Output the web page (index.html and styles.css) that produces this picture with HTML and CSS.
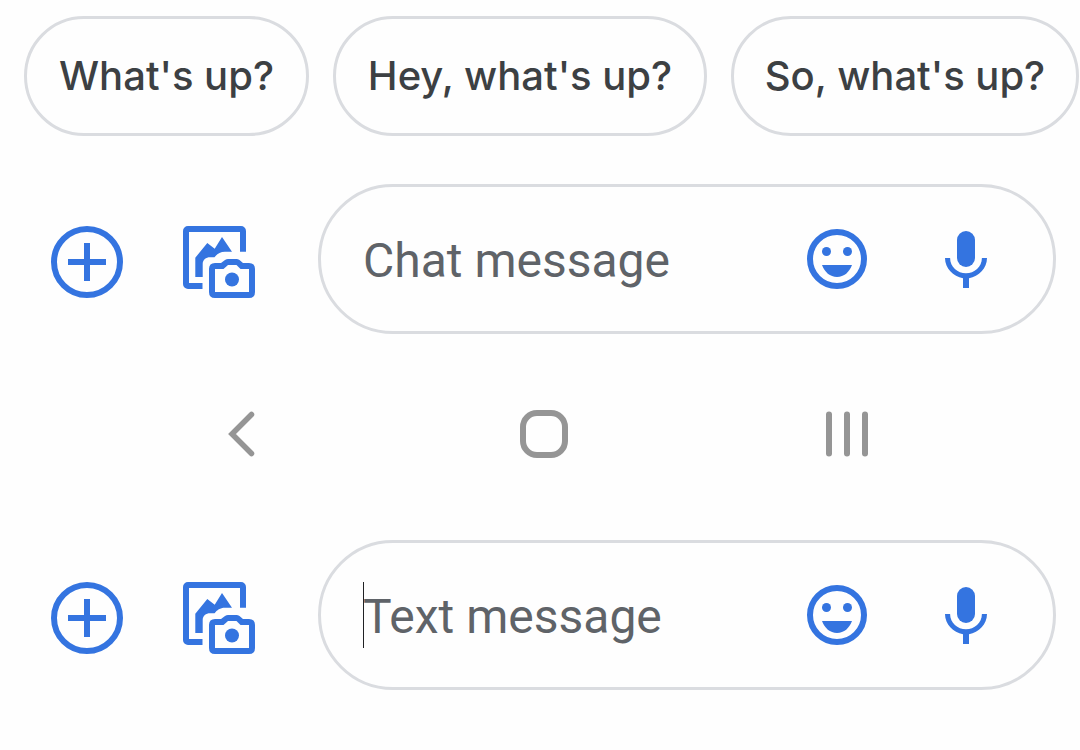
FILE: index.html
```html
<!DOCTYPE html>
<html lang="en">
<head>
<meta charset="utf-8">
<meta name="viewport" content="width=device-width, initial-scale=1">
<title>Messages</title>
<link rel="stylesheet" href="styles.css">
</head>
<body>
<svg class="defs" aria-hidden="true">
  <symbol id="add" viewBox="0 0 72 72">
    <circle cx="36" cy="36" r="33" fill="none" stroke="currentColor" stroke-width="6"/>
    <path d="M36 17V55M17 36H55" stroke="currentColor" stroke-width="6"/>
  </symbol>
  <symbol id="gallery" viewBox="0 0 72 72">
    <path d="M19.5 60H5a2 2 0 0 1-2-2V5a2 2 0 0 1 2-2H58a2 2 0 0 1 2 2V25.7" fill="none" stroke="currentColor" stroke-width="6"/>
    <path d="M12.3 51V31.7L24.3 17L31.7 22.700L39 11L49 25.700H42C37 25.700 34 28 31.500 31.300H27C23 31.300 19.700 34 19.700 38V51Z" fill="currentColor"/>
    <path fill="currentColor" fill-rule="evenodd" d="M32 37H38L42 34Q43.500 33 45 33H53.500Q55 33 56.500 34L60 37H66Q72 37 72 43V66Q72 72 66 72H32Q26 72 26 66V43Q26 37 32 37ZM32 43V66H66V43H57.500L53.500 39H45L40.500 43Z"/>
    <circle cx="49" cy="53.500" r="7" fill="currentColor"/>
  </symbol>
  <symbol id="emoji" viewBox="0 0 72 72">
    <circle cx="36" cy="36" r="27" fill="none" stroke="currentColor" stroke-width="6"/>
    <circle cx="25.500" cy="28.500" r="4.500" fill="currentColor"/>
    <circle cx="46.500" cy="28.500" r="4.500" fill="currentColor"/>
    <path d="M21 42H51C48.500 49 43 54 36 54S23.500 49 21 42Z" fill="currentColor"/>
  </symbol>
  <symbol id="mic" viewBox="0 0 72 72">
    <rect x="27" y="8" width="18" height="36" rx="9" fill="currentColor"/>
    <path d="M56.900 35H57C57 45.200 48.800 53.700 39 55.200V65H33V55.200C23.200 53.700 15 45.200 15 35H20.100C20.100 44 27.700 50.300 36 50.300S51.900 44 51.900 35Z" fill="currentColor"/>
  </symbol>
</svg>

<main class="screen">
  <div class="chips">
    <button class="chip" type="button">What's up?</button>
    <button class="chip" type="button">Hey, what's up?</button>
    <button class="chip" type="button">So, what's up?</button>
  </div>

  <form class="composer">
    <div class="tools">
      <button class="icon-button" type="button" aria-label="Add attachment"><svg class="icon"><use href="#add"/></svg></button>
      <button class="icon-button" type="button" aria-label="Photos and camera"><svg class="icon"><use href="#gallery"/></svg></button>
    </div>
    <div class="field">
      <div class="entry">
        <input class="message" type="text" placeholder="Chat message" aria-label="Chat message">
      </div>
      <button class="icon-button" type="button" aria-label="Emoji"><svg class="icon"><use href="#emoji"/></svg></button>
      <button class="icon-button" type="button" aria-label="Voice message"><svg class="icon"><use href="#mic"/></svg></button>
    </div>
  </form>

  <nav class="system-nav" aria-label="System">
    <button class="nav-button" type="button" aria-label="Back">
      <svg class="nav-icon" viewBox="0 0 48 48"><path d="M34.500 4.500L15 24L34.500 43.500" fill="none" stroke="currentColor" stroke-width="5.500" stroke-linecap="round"/></svg>
    </button>
    <button class="nav-button" type="button" aria-label="Home">
      <svg class="nav-icon" viewBox="0 0 48 48"><rect x="3" y="3" width="42" height="42" rx="14" fill="none" stroke="currentColor" stroke-width="6"/></svg>
    </button>
    <button class="nav-button" type="button" aria-label="Recent apps">
      <svg class="nav-icon" viewBox="0 0 48 48"><path d="M6 4.500V43.500M24 4.500V43.500M42 4.500V43.500" stroke="currentColor" stroke-width="6" stroke-linecap="round"/></svg>
    </button>
  </nav>

  <form class="composer">
    <div class="tools">
      <button class="icon-button" type="button" aria-label="Add attachment"><svg class="icon"><use href="#add"/></svg></button>
      <button class="icon-button" type="button" aria-label="Photos and camera"><svg class="icon"><use href="#gallery"/></svg></button>
    </div>
    <div class="field">
      <div class="entry">
        <input class="message" type="text" placeholder="Text message" aria-label="Text message">
        <span class="caret"></span>
      </div>
      <button class="icon-button" type="button" aria-label="Emoji"><svg class="icon"><use href="#emoji"/></svg></button>
      <button class="icon-button" type="button" aria-label="Voice message"><svg class="icon"><use href="#mic"/></svg></button>
    </div>
  </form>
</main>
</body>
</html>
```
FILE: styles.css
```css
* { box-sizing: border-box; }

body {
  margin: 0;
  background: #fefefe;
  font-family: Roboto, "Liberation Sans", sans-serif;
}

button {
  padding: 0;
  border: 0;
  background: none;
  cursor: pointer;
}

.defs {
  position: absolute;
  width: 0;
  height: 0;
}

.screen { padding: 16px 0 48px; }

.chips {
  display: grid;
  grid-template-columns: 285fr 374fr 348fr;
  gap: 24px;
  padding: 0 1px 0 24px;
}

.chip {
  min-height: 120px;
  border: 3px solid #dadce0;
  border-radius: 60px;
  color: #3c4043;
  font-family: Inter, Roboto, sans-serif;
  font-size: 40px;
  font-weight: 500;
  line-height: 48px;
  white-space: nowrap;
}

.composer {
  display: flex;
  align-items: center;
  gap: 63px;
  margin-top: 48px;
  padding: 0 24px 0 51px;
}

.tools {
  display: flex;
  gap: 60px;
  padding-top: 6px;
}

.icon-button {
  flex: none;
  color: #3474e0;
}

.icon {
  display: block;
  width: 72px;
  height: 72px;
}

.field {
  display: flex;
  flex: 1;
  align-items: center;
  gap: 57px;
  min-width: 0;
  min-height: 150px;
  padding: 0 51px 0 42px;
  border: 3px solid #dadce0;
  border-radius: 75px;
}

.entry {
  position: relative;
  display: flex;
  flex: 1;
  min-width: 0;
}

.message {
  flex: 1;
  min-width: 0;
  height: 66px;
  padding: 2px 0 0;
  border: 0;
  outline: 0;
  background: none;
  color: #3c4043;
  font-family: inherit;
  font-size: 48px;
}

.message::placeholder {
  color: #5f6368;
  opacity: 1;
}

.caret {
  position: absolute;
  top: 0;
  bottom: 0;
  left: 0;
  width: 1px;
  background: #202124;
}

.system-nav {
  display: grid;
  grid-template-columns: repeat(3, 1fr);
  margin-top: 76px;
  padding: 0 82px 0 89px;
  color: #959595;
}

.nav-button {
  justify-self: center;
  color: inherit;
}

.nav-icon {
  display: block;
  width: 48px;
  height: 48px;
}

.system-nav + .composer { margin-top: 82px; }
```
